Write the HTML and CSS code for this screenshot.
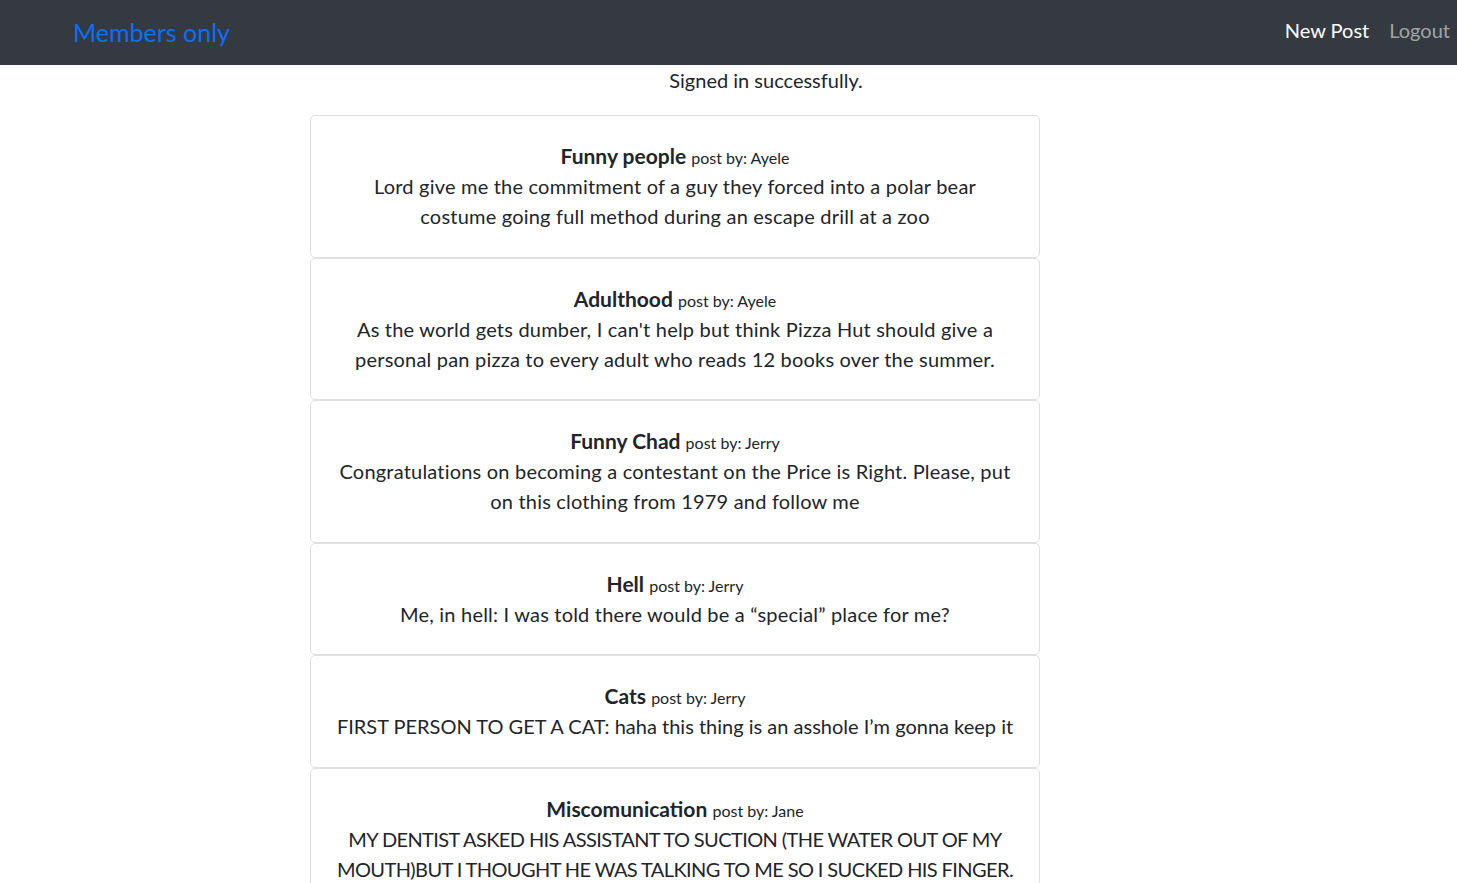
FILE: index.html
```html
<!DOCTYPE html>
<html lang="en">
<head>
<meta charset="utf-8">
<title>Members only</title>
<link rel="stylesheet" href="styles.css">
</head>
<body>
<nav class="navbar">
  <a class="brand" href="#">Members only</a>
  <div class="nav-links">
    <a class="nav-link active" href="#">New Post</a>
    <a class="nav-link" href="#">Logout</a>
  </div>
</nav>
<p class="notice">Signed in successfully.</p>
<main class="posts">
  <div class="card">
    <div class="card-title"><strong>Funny people</strong> <span class="by">post by: Ayele</span></div>
    <p class="card-text">Lord give me the commitment of a guy they forced into a polar bear costume going full method during an escape drill at a zoo</p>
  </div>
  <div class="card">
    <div class="card-title"><strong>Adulthood</strong> <span class="by">post by: Ayele</span></div>
    <p class="card-text">As the world gets dumber, I can't help but think Pizza Hut should give a personal pan pizza to every adult who reads 12 books over the summer.</p>
  </div>
  <div class="card">
    <div class="card-title"><strong>Funny Chad</strong> <span class="by">post by: Jerry</span></div>
    <p class="card-text">Congratulations on becoming a contestant on the Price is Right. Please, put on this clothing from 1979 and follow me</p>
  </div>
  <div class="card">
    <div class="card-title"><strong>Hell</strong> <span class="by">post by: Jerry</span></div>
    <p class="card-text">Me, in hell: I was told there would be a “special” place for me?</p>
  </div>
  <div class="card">
    <div class="card-title"><strong>Cats</strong> <span class="by">post by: Jerry</span></div>
    <p class="card-text mixed">FIRST PERSON TO GET A CAT: haha this thing is an asshole I’m gonna keep it</p>
  </div>
  <div class="card">
    <div class="card-title"><strong>Miscomunication</strong> <span class="by">post by: Jane</span></div>
    <p class="card-text caps">MY DENTIST ASKED HIS ASSISTANT TO SUCTION (THE WATER OUT OF MY MOUTH)BUT I THOUGHT HE WAS TALKING TO ME SO I SUCKED HIS FINGER.</p>
  </div>
</main>
</body>
</html>
```
FILE: styles.css
```css
* { box-sizing: border-box; }
html, body { margin: 0; padding: 0; }
body {
  font-family: Lato, "Noto Sans", "DejaVu Sans", sans-serif;
  font-size: 20px;
  line-height: 30px;
  color: #212529;
  background: #fff;
}
a { text-decoration: none; }
.navbar {
  height: 65px;
  background: #343a40;
  display: flex;
  align-items: center;
  justify-content: space-between;
  padding: 0 7px 0 73px;
}
.brand {
  color: #0d6efd;
  font-size: 25px;
  line-height: 36px;
  margin-bottom: 2px;
}
.nav-links {
  display: flex;
  gap: 20px;
  margin-bottom: 5px;
}
.nav-link {
  color: rgba(255,255,255,.55);
  font-size: 20px;
}
.nav-link.active { color: #fff; }
.notice {
  margin: 0;
  height: 50px;
  padding: 0 0 0 75px;
  text-align: center;
}
.posts {
  width: 730px;
  margin-left: 310px;
  display: flex;
  flex-direction: column;
}
.card {
  border: 1px solid #dfdfdf;
  border-radius: 5px;
  padding: 25.25px 25px;
  text-align: center;
}
.card-title {
  height: 30px;
  line-height: 30px;
}
.card-title strong {
  font-size: 21px;
  font-weight: 700;
  line-height: 30px;
}
.card-title .by {
  font-size: 16px;
  line-height: 30px;
}
.card-text {
  margin: 0;
  letter-spacing: 0.2px;
}
.card-text.mixed { letter-spacing: 0; }
.card-text.caps { letter-spacing: -0.6px; }
```
